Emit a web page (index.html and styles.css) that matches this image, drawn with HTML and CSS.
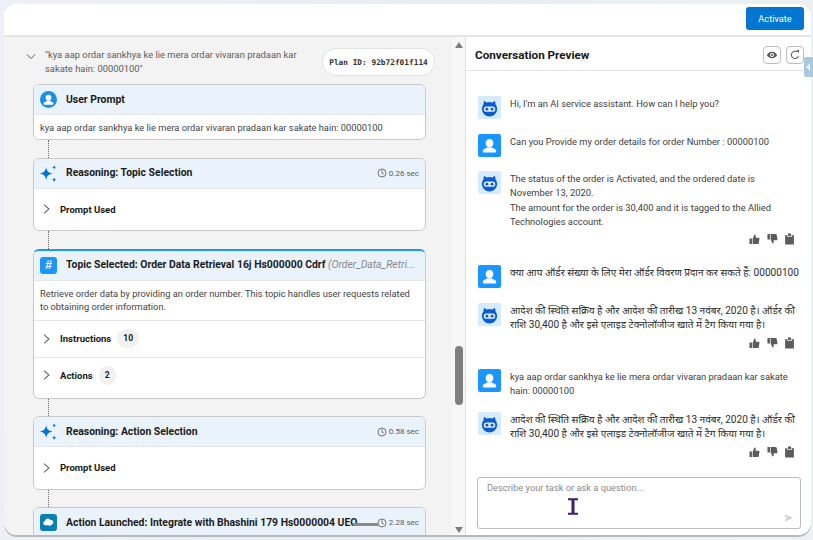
FILE: index.html
```html
<!DOCTYPE html>
<html lang="en">
<head>
<meta charset="utf-8">
<title>Conversation Preview</title>
<link rel="stylesheet" href="styles.css">
</head>
<body>
<svg class="defs" width="0" height="0" aria-hidden="true">
  <symbol id="person" viewBox="0 0 24 24"><path d="M12 5.200a4 4 0 0 1 4 4.300c0 2.600-1.800 4.600-4 4.600s-4-2-4-4.600a4 4 0 0 1 4-4.300zM5 17.600c0-1.300 1-2 2.600-2.600 1.200-.5 2-.6 2.600-1.100.5.3 1.100.5 1.800.5s1.300-.2 1.800-.5c.6.5 1.400.6 2.600 1.100 1.600.6 2.600 1.300 2.600 2.600v.4c0 .8-.6 1.300-1.300 1.300H6.300c-.7 0-1.300-.5-1.300-1.300z" fill="#fff"/></symbol>
  <symbol id="spark" viewBox="1 1 18 18"><path d="M7.500 3c.7 4.400 2.300 6 7 7-4.700 1-6.300 2.600-7 7-.7-4.400-2.300-6-7-7 4.700-1 6.300-2.600 7-7z" fill="#0176d3"/><path d="M16 1c.3 1.700.9 2.300 2.500 2.500-1.600.3-2.200.9-2.500 2.500-.3-1.600-.9-2.200-2.500-2.500 1.600-.2 2.200-.8 2.500-2.500zM16 14c.3 1.700.9 2.300 2.500 2.500-1.600.3-2.200.9-2.500 2.500-.3-1.600-.9-2.200-2.500-2.500 1.600-.2 2.200-.8 2.500-2.500z" fill="#0176d3"/></symbol>
  <symbol id="clock" viewBox="0 0 12 12"><circle cx="6" cy="6" r="4.800" fill="none" stroke="#5c5c5c" stroke-width="1"/><path d="M6 2.800v3.400l2.200 1.300" fill="none" stroke="#5c5c5c" stroke-width="1"/></symbol>
  <symbol id="chev" viewBox="0 0 8 12"><path d="M1.200 1 6.800 6l-5.600 5" fill="none" stroke="#666" stroke-width="1.200"/></symbol>
  <symbol id="bot" viewBox="0 0 24 24"><path d="M6.300 5 9 6.800a8.500 8.500 0 0 1 6 0L17.700 5l.6 3.500a8 8 0 1 1-12.600 0z" fill="#0b5cd0"/><rect x="6" y="11" width="12" height="5.400" rx="2.700" fill="#dcecfb"/><circle cx="9.300" cy="13.700" r="1.500" fill="#0b5cd0"/><circle cx="14.700" cy="13.700" r="1.500" fill="#0b5cd0"/></symbol>
  <symbol id="up" viewBox="0 0 12 12"><path d="M.5 5.500h2.700V11.500H.5zM4 5.500 6 1c.9 0 1.500.7 1.400 1.600L7.100 4.600h3.300c.7 0 1.100.5 1 1.100l-.8 4.800c-.1.600-.5 1-1.100 1H4z" fill="#5c5c5c"/></symbol>
  <symbol id="clip" viewBox="0 0 12 12"><path d="M1.200 2h2.300V3.500h5V2h2.300V12H1.200zM4.300 0h3.400v2.800H4.300z" fill="#5c5c5c"/></symbol>
</svg>

<div class="app">
  <header class="topbar"><button class="activate">Activate</button></header>
  <div class="split">
    <section class="trace">
      <div class="trace-head">
        <svg class="trace-chev" viewBox="0 0 12 8"><path d="M1 1.500 6 6.500l5-5" fill="none" stroke="#5c5c5c" stroke-width="1.200"/></svg>
        <p class="trace-title">"kya aap ordar sankhya ke lie mera ordar vivaran pradaan kar sakate hain: 00000100"</p>
        <span class="plan">Plan ID: 92b72f01f114</span>
      </div>

      <article class="card">
        <div class="card-head">
          <span class="round-ic"><svg><use href="#person"/></svg></span>
          <h3>User Prompt</h3>
        </div>
        <p class="card-text">kya aap ordar sankhya ke lie mera ordar vivaran pradaan kar sakate hain: 00000100</p>
      </article>
      <div class="link"></div>

      <article class="card">
        <div class="card-head">
          <svg class="spark"><use href="#spark"/></svg>
          <h3>Reasoning: Topic Selection</h3>
          <span class="time"><svg><use href="#clock"/></svg>0.26 sec</span>
        </div>
        <div class="row row-tall"><svg class="chev"><use href="#chev"/></svg><b>Prompt Used</b></div>
      </article>
      <div class="link"></div>

      <article class="card card-active">
        <div class="card-head">
          <span class="hash">#</span>
          <h3>Topic Selected: Order Data Retrieval 16j Hs000000 Cdrf <i>(Order_Data_Retri...</i></h3>
        </div>
        <p class="card-text card-desc">Retrieve order data by providing an order number. This topic handles user requests related to obtaining order information.</p>
        <div class="row row-line"><svg class="chev"><use href="#chev"/></svg><b>Instructions</b><span class="count">10</span></div>
        <div class="row row-last"><svg class="chev"><use href="#chev"/></svg><b>Actions</b><span class="count">2</span></div>
      </article>
      <div class="link"></div>

      <article class="card">
        <div class="card-head">
          <svg class="spark"><use href="#spark"/></svg>
          <h3>Reasoning: Action Selection</h3>
          <span class="time"><svg><use href="#clock"/></svg>0.58 sec</span>
        </div>
        <div class="row row-tall"><svg class="chev"><use href="#chev"/></svg><b>Prompt Used</b></div>
      </article>
      <div class="link"></div>

      <article class="card">
        <div class="card-head card-head-smudged">
          <span class="cloud-ic"><svg viewBox="0 0 16 16"><path d="M4 11.500a2.700 2.700 0 0 1-.3-5.300A3.600 3.600 0 0 1 10.400 5a2.900 2.900 0 0 1 1.800 5.500l-2.700 1.800-1.500-.8z" fill="#fff"/></svg></span>
          <h3>Action Launched: Integrate with Bhashini 179 Hs0000004 UEO...</h3>
          <span class="time"><svg><use href="#clock"/></svg>2.28 sec</span>
        </div>
      </article>
    </section>

    <div class="scroll">
      <span class="arrow-up"></span>
      <span class="thumb"></span>
      <span class="arrow-down"></span>
    </div>

    <section class="preview">
      <div class="preview-head">
        <h2>Conversation Preview</h2>
        <span class="tool"><svg viewBox="0 0 14 14"><path d="M1 7c1.500-2.600 3.500-3.800 6-3.800s4.500 1.200 6 3.800c-1.500 2.600-3.500 3.800-6 3.800S2.500 9.600 1 7z" fill="#5c5c5c"/><circle cx="7" cy="7" r="2.300" fill="#fff"/><circle cx="7" cy="7" r="1.200" fill="#5c5c5c"/></svg></span>
        <span class="tool"><svg viewBox="0 0 14 14"><path d="M11 8.500A4.300 4.300 0 1 1 9.500 3.300" fill="none" stroke="#5c5c5c" stroke-width="1.200"/><path d="M8.500 1 12 1.500 11.300 5z" fill="#5c5c5c"/></svg></span>
      </div>
      <div class="messages">
        <div class="msg">
          <span class="av av-bot"><svg><use href="#bot"/></svg></span>
          <div class="bubble"><p>Hi, I'm an AI service assistant. How can I help you?</p></div>
        </div>
        <div class="msg">
          <span class="av av-user"><svg><use href="#person"/></svg></span>
          <div class="bubble"><p>Can you Provide my order details for order Number : 00000100</p></div>
        </div>
        <div class="msg msg-reply">
          <span class="av av-bot"><svg><use href="#bot"/></svg></span>
          <div class="bubble">
            <p>The status of the order is Activated, and the ordered date is November 13, 2020.<br>The amount for the order is 30,400 and it is tagged to the Allied Technologies account.</p>
            <div class="acts"><svg><use href="#up"/></svg><svg class="flip"><use href="#up"/></svg><svg><use href="#clip"/></svg></div>
          </div>
        </div>
        <div class="msg">
          <span class="av av-user"><svg><use href="#person"/></svg></span>
          <div class="bubble"><p lang="hi">क्या आप ऑर्डर संख्या के लिए मेरा ऑर्डर विवरण प्रदान कर सकते हैं: 00000100</p></div>
        </div>
        <div class="msg msg-reply">
          <span class="av av-bot"><svg><use href="#bot"/></svg></span>
          <div class="bubble">
            <p lang="hi">आदेश की स्थिति सक्रिय है और आदेश की तारीख 13 नवंबर, 2020 है। ऑर्डर की राशि 30,400 है और इसे एलाइड टेक्नोलॉजीज खाते में टैग किया गया है।</p>
            <div class="acts"><svg><use href="#up"/></svg><svg class="flip"><use href="#up"/></svg><svg><use href="#clip"/></svg></div>
          </div>
        </div>
        <div class="msg msg-short">
          <span class="av av-user"><svg><use href="#person"/></svg></span>
          <div class="bubble"><p>kya aap ordar sankhya ke lie mera ordar vivaran pradaan kar sakate hain: 00000100</p></div>
        </div>
        <div class="msg msg-reply">
          <span class="av av-bot"><svg><use href="#bot"/></svg></span>
          <div class="bubble">
            <p lang="hi">आदेश की स्थिति सक्रिय है और आदेश की तारीख 13 नवंबर, 2020 है। ऑर्डर की राशि 30,400 है और इसे एलाइड टेक्नोलॉजीज खाते में टैग किया गया है।</p>
            <div class="acts"><svg><use href="#up"/></svg><svg class="flip"><use href="#up"/></svg><svg><use href="#clip"/></svg></div>
          </div>
        </div>
      </div>
      <div class="composer">
        <span class="placeholder">Describe your task or ask a question...</span>
        <svg class="send" viewBox="0 0 12 10"><path d="M1 .5 11 5 1 9.500 2 5.500 7 5 2 4.500z" fill="#cfcfcf"/></svg>
      </div>
    </section>
  </div>
</div>

<span class="side-tab"></span>
<svg class="ibeam" viewBox="0 0 10 17"><path d="M0 1.200h10M0 15.800h10" fill="none" stroke="#3f1f6e" stroke-width="2"/><path d="M5 1.200v14.600" fill="none" stroke="#3f1f6e" stroke-width="3"/></svg>
</body>
</html>
```

FILE: styles.css
```css
* { box-sizing: border-box; }
html, body { margin: 0; height: 540px; overflow: hidden; }
body {
  background: linear-gradient(100deg, #eef0f6 0%, #e9eef2 50%, #edf1f3 100%);
  font-family: Roboto, "Noto Sans", "Noto Sans Devanagari", sans-serif;
  color: #181818;
  padding: 4px 2px 5px 4px;
}
.defs { position: absolute; }
p, h2, h3 { margin: 0; }

.app {
  height: 531px;
  border-radius: 13px;
  overflow: hidden;
  display: flex;
  flex-direction: column;
  background: #fff;
  box-shadow: 0 2px 0 #b9b9b9;
}
.topbar {
  height: 33px;
  flex: none;
  display: flex;
  justify-content: flex-end;
  align-items: flex-start;
  padding: 3px 7px 0 0;
  background: #fff;
  border-bottom: 2px solid #e5e5e5;
}
.activate {
  width: 58px;
  height: 23px;
  background: #0176d3;
  color: #fff;
  border: 0;
  border-radius: 3px;
  font: 9.200px Roboto, sans-serif;
  padding: 0;
}
.split { flex: 1; min-height: 0; display: flex; }

.trace {
  width: 448px;
  flex: none;
  background: #f3f3f3;
  padding: 11px 25px 0 29px;
  overflow: hidden;
}
.trace-head {
  height: 36px;
  display: flex;
  align-items: flex-start;
  margin: 0 -8px 0 -7px;
}
.trace-chev { width: 10px; height: 7px; margin: 5px 9px 0 0; flex: none; }
.trace-title {
  width: 262px;
  font-size: 9.400px;
  line-height: 13.500px;
  color: #5c5c5c;
}
.plan {
  margin: 0 0 0 auto;
  width: 113px;
  height: 28px;
  flex: none;
  display: flex;
  align-items: center;
  justify-content: center;
  border: 1px solid #e2e2e2;
  border-radius: 14px;
  background: #fff;
  font: 700 7.800px "DejaVu Sans Mono", "Liberation Mono", monospace;
  color: #333;
}

.card {
  width: 393px;
  background: #fff;
  border: 1px solid #c9c9c9;
  border-radius: 6px;
  overflow: hidden;
}
.card-active { border-top: 2px solid #1b96ff; }
.card-head {
  height: 30px;
  display: flex;
  align-items: center;
  gap: 9px;
  padding: 0 6px;
  background: #eaf2fb;
  border-bottom: 1px solid #e3e6ea;
}
.card-head-smudged { position: relative; }
.card-head-smudged::after {
  content: "";
  position: absolute;
  left: 319px;
  top: 15px;
  width: 25px;
  height: 3px;
  background: #8a8a8a;
  filter: blur(0.6px);
}
.card-head h3 {
  font-size: 10.400px;
  font-weight: 700;
  white-space: nowrap;
  overflow: hidden;
  color: #1c1c1c;
  flex: 1;
  min-width: 0;
  line-height: 14px;
}
.card-head i { font-weight: 400; color: #8a8a8a; }
.round-ic {
  width: 17px;
  height: 17px;
  border-radius: 50%;
  background: #1b8fe8;
  flex: none;
}
.round-ic svg { display: block; width: 17px; height: 17px; }
.spark { width: 17px; height: 17px; flex: none; }
.hash {
  width: 17px;
  height: 17px;
  flex: none;
  border-radius: 3px;
  background: #1b96ff;
  color: #fff;
  font: 700 12px/17px "Liberation Sans", sans-serif;
  text-align: center;
}
.cloud-ic {
  width: 17px;
  height: 17px;
  flex: none;
  border-radius: 3px;
  background: #0b7fb5;
  padding: 2px;
}
.cloud-ic svg { display: block; width: 13px; height: 13px; }
.time {
  flex: none;
  display: flex;
  align-items: center;
  gap: 2px;
  font-size: 8px;
  color: #5c5c5c;
}
.time svg { width: 10px; height: 10px; }
.card-text {
  padding: 6px 6px 4px;
  font-size: 9.300px;
  line-height: 14px;
  color: #444;
}
.card-desc { padding: 6px 6px 0; border-bottom: 1px solid #e5e5e5; height: 40px; line-height: 13.500px; }
.row {
  display: flex;
  align-items: center;
  padding-left: 9px;
  font-size: 9.500px;
  color: #181818;
}
.row b { font-weight: 700; }
.chev { width: 7px; height: 12px; margin-right: 10px; flex: none; }
.row-tall { height: 41.500px; }
.row-line { height: 37px; border-bottom: 1px solid #e5e5e5; }
.row-last { height: 40px; padding-bottom: 5px; }
.count {
  margin-left: 6px;
  min-width: 17px;
  height: 19px;
  padding: 0 6px;
  border-radius: 10px;
  background: #f1f1f1;
  font-weight: 700;
  font-size: 8.500px;
  line-height: 19px;
  text-align: center;
}
.link {
  width: 1px;
  height: 17.500px;
  margin-left: 15px;
  border-left: 1px dotted #6b6b6b;
}

.scroll {
  width: 14px;
  flex: none;
  position: relative;
  display: flex;
  flex-direction: column;
  align-items: center;
  background: #f7f7f7;
  border-right: 1px solid #e0e0e0;
}
.arrow-up, .arrow-down {
  width: 0;
  height: 0;
  border-left: 4px solid transparent;
  border-right: 4px solid transparent;
}
.arrow-up { border-bottom: 6px solid #7d7d7d; margin-top: 5px; }
.arrow-down { border-top: 6px solid #7d7d7d; margin-top: auto; margin-bottom: 2px; }
.thumb {
  position: absolute;
  top: 309px;
  left: 3px;
  width: 8px;
  height: 59px;
  background: #7f7f7f;
  border-radius: 4px;
}

.preview {
  flex: 1;
  min-width: 0;
  display: flex;
  flex-direction: column;
  background: #fff;
}
.preview-head {
  height: 34px;
  flex: none;
  display: flex;
  align-items: center;
  gap: 5px;
  padding: 2px 7px 0 9px;
  border-bottom: 1px solid #e5e5e5;
}
.preview-head h2 { font-size: 11.700px; font-weight: 700; margin-right: auto; }
.tool {
  width: 18px;
  height: 18px;
  border: 1px solid #bdbdbd;
  border-radius: 4px;
  display: flex;
  align-items: center;
  justify-content: center;
}
.tool svg { width: 12px; height: 12px; }

.messages { flex: 1; min-height: 0; padding: 25px 11px 0 12px; overflow: hidden; }
.msg { display: flex; gap: 9px; margin-bottom: 14.500px; }
.msg-reply { margin-bottom: 20px; }
.msg-short { margin-bottom: 13.500px; }
.av {
  width: 23px;
  height: 23px;
  flex: none;
  border-radius: 2px;
  display: block;
}
.av svg { display: block; width: 23px; height: 23px; }
.av-bot { background: #d6ebfd; }
.av-user { background: #1b96ff; }
.bubble { flex: 1; min-width: 0; padding-top: 1px; }
.bubble p {
  font-size: 9.350px;
  line-height: 14.300px;
  color: #3e3e3e;
}
.bubble p[lang="hi"] { font-size: 10.100px; line-height: 14.500px; color: #2e2e2e; }
.acts { display: flex; justify-content: flex-end; gap: 6.500px; padding: 4px 5px 0 0; height: 16px; }
.acts svg { width: 11px; height: 12px; }
.flip { transform: rotate(180deg) scaleX(-1); }

.composer {
  position: relative;
  flex: none;
  height: 52px;
  margin: 0 10px 6px 11px;
  border: 1px solid #bdbdbd;
  border-radius: 3px;
  padding: 3px 9px;
}
.placeholder { display: block; font-size: 9.300px; line-height: 13px; color: #8a8a8a; }
.send { position: absolute; right: 6px; bottom: 6px; width: 10px; height: 8px; }

.side-tab {
  position: absolute;
  top: 57px;
  right: 0;
  width: 9px;
  height: 20px;
  background: #a9c8dc;
  border-radius: 2px 0 0 2px;
}
.side-tab::after {
  content: "";
  position: absolute;
  top: 6px;
  left: 2px;
  border-top: 4px solid transparent;
  border-bottom: 4px solid transparent;
  border-right: 4px solid #e8f1f7;
}
.ibeam {
  position: absolute;
  left: 568px;
  top: 498px;
  width: 10px;
  height: 17px;
}
```
